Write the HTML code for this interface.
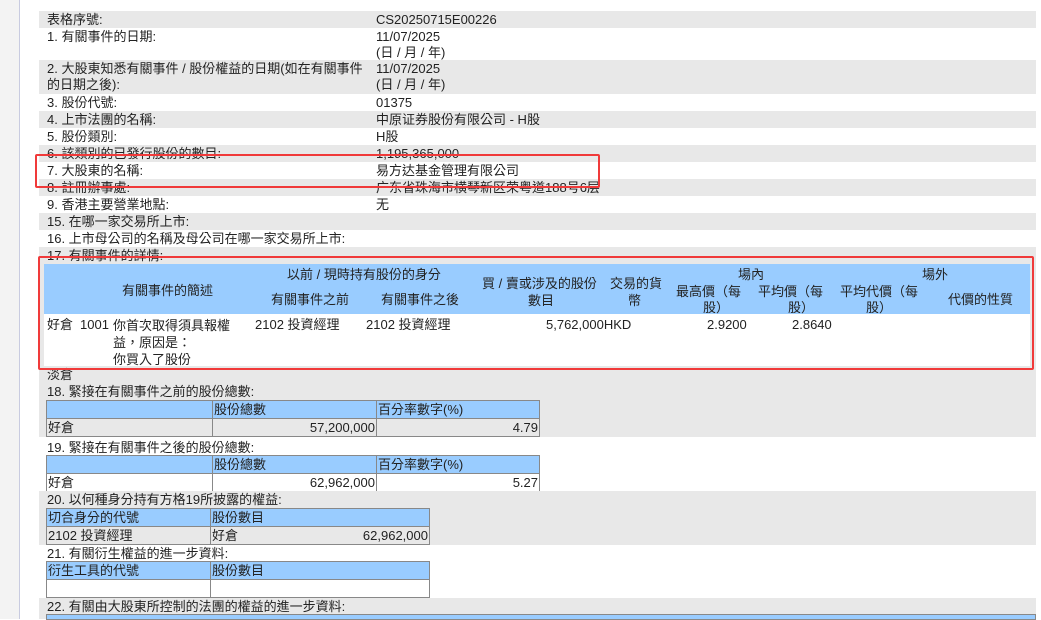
<!DOCTYPE html>
<html><head><meta charset="utf-8"><style>
*{margin:0;padding:0;box-sizing:border-box}
body{width:1041px;height:619px;overflow:hidden;background:#fff;font-family:"Liberation Sans","Noto Sans CJK TC",sans-serif;font-size:13px;color:#222;position:relative}
.side{position:absolute;left:0;top:0;width:20px;height:619px;background:#f3f3f3;border-right:1px solid #c8cbe0}
.r{position:absolute;left:39px;width:997px;line-height:16px}
.g{background:#e8e8e8}
.l{position:absolute;left:8px;top:1px;white-space:nowrap}
.v{position:absolute;left:337px;top:1px;white-space:nowrap}
.a{position:absolute;white-space:nowrap;line-height:17px}
.box{position:absolute;border:2.5px solid #f03a3a;border-radius:2px}
table{position:absolute;border-collapse:collapse}
td{border:1px solid #888;height:18px;line-height:16px;padding:0 1px;vertical-align:bottom}
.h td{background:#99ccff}
.num{text-align:right}
</style></head><body>
<div class="side"></div>
<div class="r g" style="top:11px;height:17px"><span class="l">表格序號:</span><span class="v">CS20250715E00226</span></div>
<div class="r" style="top:28px;height:32px"><span class="l">1. 有關事件的日期:</span><span class="v">11/07/2025<br>(日 / 月 / 年)</span></div>
<div class="r g" style="top:60px;height:34px"><span class="l">2. 大股東知悉有關事件 / 股份權益的日期(如在有關事件<br>的日期之後):</span><span class="v">11/07/2025<br>(日 / 月 / 年)</span></div>
<div class="r" style="top:94px;height:17px"><span class="l">3. 股份代號:</span><span class="v">01375</span></div>
<div class="r g" style="top:111px;height:17px"><span class="l">4. 上市法團的名稱:</span><span class="v">中原证券股份有限公司 - H股</span></div>
<div class="r" style="top:128px;height:17px"><span class="l">5. 股份類別:</span><span class="v">H股</span></div>
<div class="r g" style="top:145px;height:17px"><span class="l">6. 該類別的已發行股份的數目:</span><span class="v">1,195,365,000</span></div>
<div class="r" style="top:162px;height:17px"><span class="l">7. 大股東的名稱:</span><span class="v">易方达基金管理有限公司</span></div>
<div class="r g" style="top:179px;height:17px"><span class="l">8. 註冊辦事處:</span><span class="v">广东省珠海市横琴新区荣粤道188号6层</span></div>
<div class="r" style="top:196px;height:17px"><span class="l">9. 香港主要營業地點:</span><span class="v">无</span></div>
<div class="r g" style="top:213px;height:17px"><span class="l">15. 在哪一家交易所上市:</span></div>
<div class="r" style="top:230px;height:17px"><span class="l">16. 上市母公司的名稱及母公司在哪一家交易所上市:</span></div>
<div class="r g" style="top:247px;height:17px"><span class="l">17. 有關事件的詳情:</span></div>
<div class="r g" style="top:264px;height:102px"></div>
<div style="position:absolute;left:44px;top:264px;width:986px;height:50px;background:#99ccff"></div>
<div style="position:absolute;left:44px;top:314px;width:986px;height:52px;background:#fff"></div>
<span class="a" style="left:122px;top:282px">有關事件的簡述</span>
<span class="a" style="left:287px;top:266px">以前 / 現時持有股份的身分</span>
<span class="a" style="left:271px;top:291px">有關事件之前</span>
<span class="a" style="left:381px;top:291px">有關事件之後</span>
<span class="a" style="left:482px;top:275px">買 / 賣或涉及的股份</span>
<span class="a" style="left:528px;top:292px">數目</span>
<span class="a" style="left:610px;top:275px">交易的貨</span>
<span class="a" style="left:628px;top:292px">幣</span>
<span class="a" style="left:738px;top:266px">場內</span>
<span class="a" style="left:922px;top:266px">場外</span>
<span class="a" style="left:676px;top:283px">最高價（每</span>
<span class="a" style="left:703px;top:299px">股）</span>
<span class="a" style="left:758px;top:283px">平均價（每</span>
<span class="a" style="left:788px;top:299px">股）</span>
<span class="a" style="left:840px;top:283px">平均代價（每</span>
<span class="a" style="left:866px;top:299px">股）</span>
<span class="a" style="left:948px;top:291px">代價的性質</span>
<span class="a" style="left:47px;top:316px">好倉</span>
<span class="a" style="left:80px;top:316px">1001</span>
<span class="a" style="left:113px;top:317px;line-height:17px">你首次取得須具報權<br>益，原因是：<br>你買入了股份</span>
<span class="a" style="left:255px;top:316px">2102 投資經理</span>
<span class="a" style="left:366px;top:316px">2102 投資經理</span>
<span class="a" style="left:546px;top:316px">5,762,000HKD</span>
<span class="a" style="left:707px;top:316px">2.9200</span>
<span class="a" style="left:792px;top:316px">2.8640</span>
<div class="r g" style="top:366px;height:71px"><span class="l">淡倉</span><span class="l" style="top:18px">18. 緊接在有關事件之前的股份總數:</span></div>
<table style="left:46px;top:400px;width:494px">
<tr class="h"><td style="width:166px"></td><td style="width:164px">股份總數</td><td>百分率數字(%)</td></tr>
<tr><td>好倉</td><td class="num">57,200,000</td><td class="num">4.79</td></tr></table>
<div class="r" style="top:437px;height:54px"><span class="l" style="top:3px">19. 緊接在有關事件之後的股份總數:</span></div>
<table style="left:46px;top:455px;width:494px">
<tr class="h"><td style="width:166px"></td><td style="width:164px">股份總數</td><td>百分率數字(%)</td></tr>
<tr><td>好倉</td><td class="num">62,962,000</td><td class="num">5.27</td></tr></table>
<div class="r g" style="top:491px;height:54px"><span class="l" style="top:1px">20. 以何種身分持有方格19所披露的權益:</span></div>
<table style="left:46px;top:508px;width:384px">
<tr class="h"><td style="width:164px">切合身分的代號</td><td>股份數目</td></tr>
<tr><td>2102 投資經理</td><td><span style="float:left">好倉</span><span style="float:right">62,962,000</span></td></tr></table>
<div class="r" style="top:545px;height:53px"><span class="l" style="top:1px">21. 有關衍生權益的進一步資料:</span></div>
<table style="left:46px;top:561px;width:384px">
<tr class="h"><td style="width:164px">衍生工具的代號</td><td>股份數目</td></tr>
<tr><td></td><td></td></tr></table>
<div class="r g" style="top:598px;height:21px"><span class="l" style="top:1px">22. 有關由大股東所控制的法團的權益的進一步資料:</span></div>
<div style="position:absolute;left:46px;top:614px;width:990px;height:6px;background:#99ccff;border:1px solid #888"></div>
<div class="box" style="left:35px;top:154px;width:565px;height:34px"></div>
<div class="box" style="left:38px;top:256px;width:996px;height:114px"></div>
</body></html>
